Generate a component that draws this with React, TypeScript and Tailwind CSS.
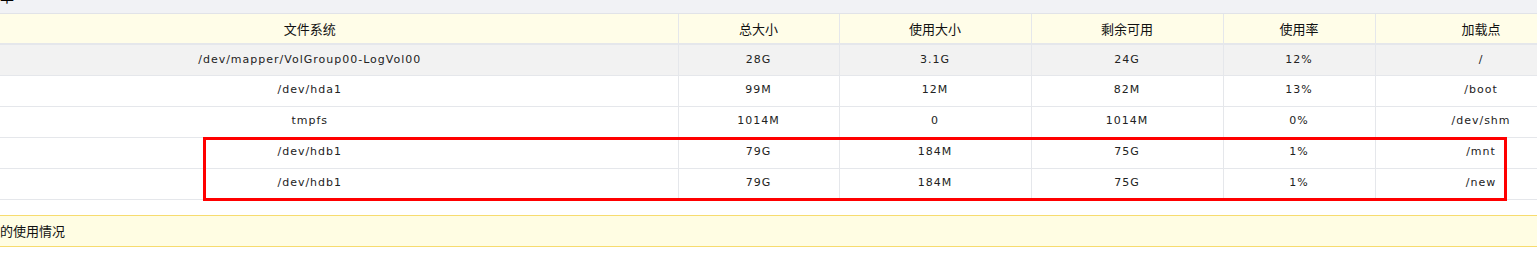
const headers = ["文件系统", "总大小", "使用大小", "剩余可用", "使用率", "加载点"];

const rows = [
  ["/dev/mapper/VolGroup00-LogVol00", "28G", "3.1G", "24G", "12%", "/"],
  ["/dev/hda1", "99M", "12M", "82M", "13%", "/boot"],
  ["tmpfs", "1014M", "0", "1014M", "0%", "/dev/shm"],
  ["/dev/hdb1", "79G", "184M", "75G", "1%", "/mnt"],
  ["/dev/hdb1", "79G", "184M", "75G", "1%", "/new"],
];

const colWidths = ["w-[736px]", "w-[161px]", "w-[192px]", "w-[192px]", "w-[152px]", "w-[212px]"];

export default function App() {
  return (
    <div className="relative w-[1537px] h-[267px] overflow-hidden bg-white">
      <div className="ml-[-58px] w-[1645px]">
        {/* title strip, scrolled out of view */}
        <div className="h-[14px] overflow-hidden bg-[#f1f2f5] border-b border-[#e1e3e8] pl-[58px]">
          <span className="block mt-[-11px] text-[14px] leading-[14px] text-black font-['Noto_Sans_CJK_SC',sans-serif]">单</span>
        </div>

        <table className="table-fixed border-collapse w-[1645px] text-[#222]">
          <colgroup>
            {colWidths.map((w, i) => (
              <col key={i} className={w} />
            ))}
          </colgroup>
          <thead>
            <tr className="h-[30px] bg-[#fffde8]">
              {headers.map((h) => (
                <th
                  key={h}
                  className="p-0 font-normal text-[13px] text-center text-[#111] border-r border-b-2 border-[#e5e7eb] font-['Noto_Sans_CJK_SC',sans-serif]"
                >
                  {h}
                </th>
              ))}
            </tr>
          </thead>
          <tbody>
            {rows.map((r, i) => (
              <tr key={i} className={`h-[31px] ${i === 0 ? "bg-[#f2f2f2]" : "bg-white"}`}>
                {r.map((c, j) => (
                  <td
                    key={j}
                    className="p-0 text-center text-[11px] tracking-[1px] border-r border-b border-[#e5e7eb] font-['DejaVu_Sans',sans-serif]"
                  >
                    {c}
                  </td>
                ))}
              </tr>
            ))}
          </tbody>
        </table>

        <div className="mt-[15px] h-[32px] flex items-center pl-[58px] bg-[#fffde3] border-y border-[#f7dc6f] text-[13px] text-[#111] font-['Noto_Sans_CJK_SC',sans-serif]">
          的使用情况
        </div>
      </div>

      {/* highlight annotation */}
      <div className="absolute left-[203px] top-[137px] w-[1304px] h-[64px] border-[3px] border-[#ff0000] pointer-events-none" />
    </div>
  );
}
